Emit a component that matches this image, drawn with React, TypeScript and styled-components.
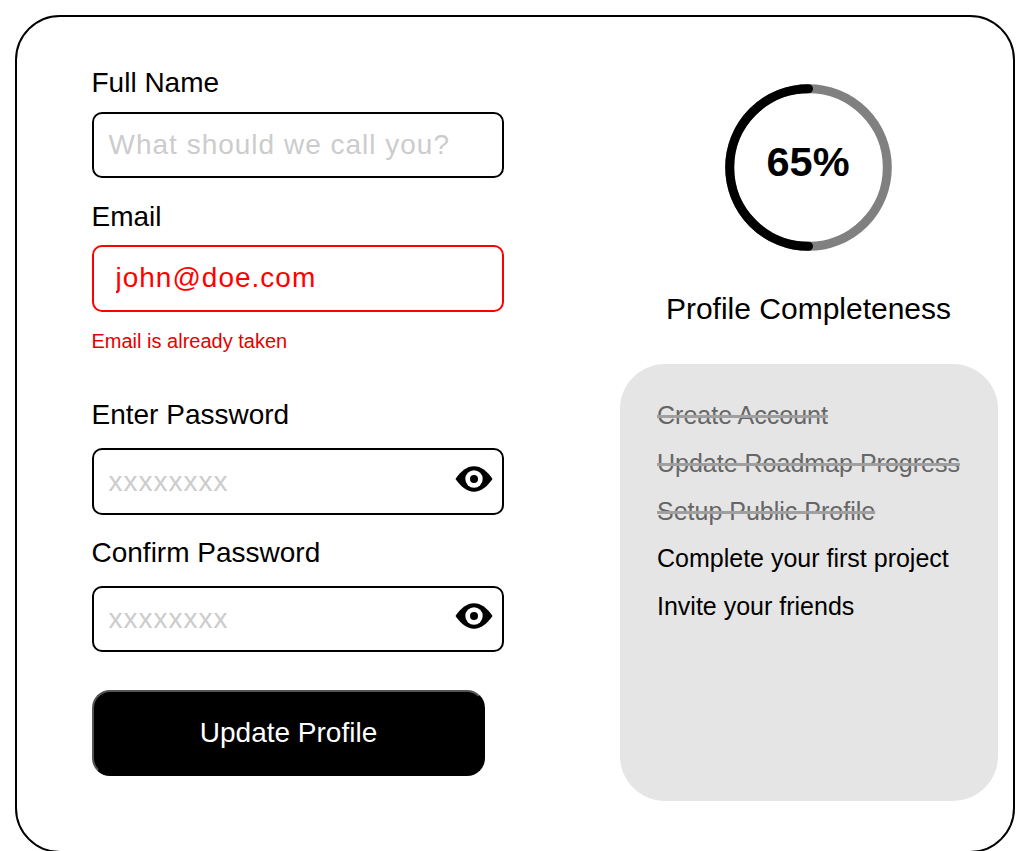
import React from 'react';
import styled, { createGlobalStyle } from 'styled-components';

const GlobalStyle = createGlobalStyle`
  *, *::before, *::after { box-sizing: border-box; }
  body {
    margin: 0;
    background: #fff;
    color: #000;
    font-family: "Liberation Sans", Arial, sans-serif;
    overflow: hidden;
  }
`;

const Card = styled.main`
  display: flex;
  justify-content: space-between;
  width: 1000px;
  height: 838px;
  margin: 15px 0 0 15px;
  padding: 50px 15px 0 75px;
  border: 2px solid #000;
  border-radius: 45px;
`;

const Form = styled.form`
  display: flex;
  flex-direction: column;
  width: 412px;
`;

const Field = styled.div<{ $gap: number; $after: number }>`
  display: flex;
  flex-direction: column;
  gap: ${({ $gap }) => $gap}px;
  margin-bottom: ${({ $after }) => $after}px;
`;

const Label = styled.label`
  margin-left: -0.5px;
  font-size: 28px;
  line-height: 32px;
`;

const InputBox = styled.div<{ $height: number; $invalid?: boolean; $bottom?: number }>`
  display: flex;
  align-items: center;
  height: ${({ $height }) => $height}px;
  padding: 0 9px ${({ $bottom = 1 }) => $bottom}px ${({ $invalid }) => ($invalid ? 21.5 : 14.5)}px;
  border: 2px solid ${({ $invalid }) => ($invalid ? '#f00' : '#000')};
  border-radius: 10px;
  color: ${({ $invalid }) => ($invalid ? '#f00' : '#000')};
`;

const Input = styled.input`
  flex: 1;
  min-width: 0;
  height: 34px;
  padding: 0;
  border: 0;
  outline: 0;
  background: none;
  color: inherit;
  font: 28px "Liberation Sans", Arial, sans-serif;
  letter-spacing: 1px;

  &::placeholder {
    color: #ccc;
    opacity: 1;
  }
`;

const EyeButton = styled.button`
  display: flex;
  padding: 0 0 5px;
  border: 0;
  background: none;
`;

const ErrorText = styled.p`
  margin: 18px 0 47px -0.5px;
  color: #e60000;
  font-size: 20px;
  line-height: 22px;
`;

const SubmitButton = styled.button`
  width: 393px;
  height: 86px;
  padding: 0;
  border: 2px outset #000;
  border-radius: 18px;
  background: #000;
  color: #fff;
  font: 28px "Liberation Sans", Arial, sans-serif;
`;

const Sidebar = styled.aside`
  display: flex;
  flex-direction: column;
  align-items: center;
  width: 378px;
  padding-top: 17px;
`;

const Gauge = styled.div`
  display: grid;
  place-items: center;
  width: 168px;
  height: 168px;

  > * { grid-area: 1 / 1; }
`;

const Percent = styled.strong`
  padding: 0 2px 12px 0;
  font-size: 41.5px;
  line-height: 48px;
`;

const Heading = styled.h1`
  margin: 39px 1px 37px 0;
  font-size: 30px;
  font-weight: 400;
  line-height: 36px;
`;

const Panel = styled.ul`
  width: 378px;
  height: 437px;
  margin: 0;
  padding: 28px 37px;
  border-radius: 45px;
  background: #e5e5e5;
  list-style: none;
`;

const Step = styled.li<{ $done: boolean }>`
  color: ${({ $done }) => ($done ? '#666' : '#000')};
  font-size: 25px;
  line-height: 47.75px;
  white-space: nowrap;
  text-decoration: ${({ $done }) => ($done ? 'line-through #a0a0a0 3px' : 'none')};
`;

const steps = [
  { text: 'Create Account', done: true },
  { text: 'Update Roadmap Progress', done: true },
  { text: 'Setup Public Profile', done: true },
  { text: 'Complete your first project', done: false },
  { text: 'Invite your friends', done: false },
];

const EyeIcon = () => (
  <svg width="38" height="28" viewBox="0 0 38 28">
    <path d="M.5 14C6 6 12 1.300 19 1.300S32 6 37.500 14C32 22 26 26.700 19 26.700S6 22 .5 14Z" fill="#000" />
    <circle cx="19" cy="14" r="8.7" fill="#fff" />
    <circle cx="19" cy="14" r="4" fill="#000" />
  </svg>
);

type PasswordProps = { id: string; label: string; height: number; bottom: number; after: number };

const PasswordField = ({ id, label, height, bottom, after }: PasswordProps) => (
  <Field $gap={17} $after={after}>
    <Label htmlFor={id}>{label}</Label>
    <InputBox $height={height} $bottom={bottom}>
      <Input id={id} type="password" placeholder="xxxxxxxx" />
      <EyeButton type="button" aria-label="Show password">
        <EyeIcon />
      </EyeButton>
    </InputBox>
  </Field>
);

export default function App() {
  return (
    <>
      <GlobalStyle />
      <Card>
        <Form>
          <Field $gap={13} $after={23}>
            <Label htmlFor="name">Full Name</Label>
            <InputBox $height={66}>
              <Input id="name" placeholder="What should we call you?" />
            </InputBox>
          </Field>
          <Field $gap={12} $after={0}>
            <Label htmlFor="email">Email</Label>
            <InputBox $height={67} $invalid>
              <Input id="email" defaultValue="john@doe.com" />
            </InputBox>
          </Field>
          <ErrorText>Email is already taken</ErrorText>
          <PasswordField id="password" label="Enter Password" height={67} bottom={0} after={22} />
          <PasswordField id="confirm" label="Confirm Password" height={66} bottom={1} after={38} />
          <SubmitButton type="button">Update Profile</SubmitButton>
        </Form>
        <Sidebar>
          <Gauge>
            <svg width="168" height="168" viewBox="0 0 168 168" fill="none" strokeWidth="9">
              <circle cx="83.5" cy="83.5" r="78.8" stroke="#808080" />
              <path d="M83.5 4.7A78.8 78.8 0 0 0 83.5 162.3" stroke="#000" strokeLinecap="round" />
            </svg>
            <Percent>65%</Percent>
          </Gauge>
          <Heading>Profile Completeness</Heading>
          <Panel>
            {steps.map(({ text, done }) => (
              <Step key={text} $done={done}>
                {text}
              </Step>
            ))}
          </Panel>
        </Sidebar>
      </Card>
    </>
  );
}
